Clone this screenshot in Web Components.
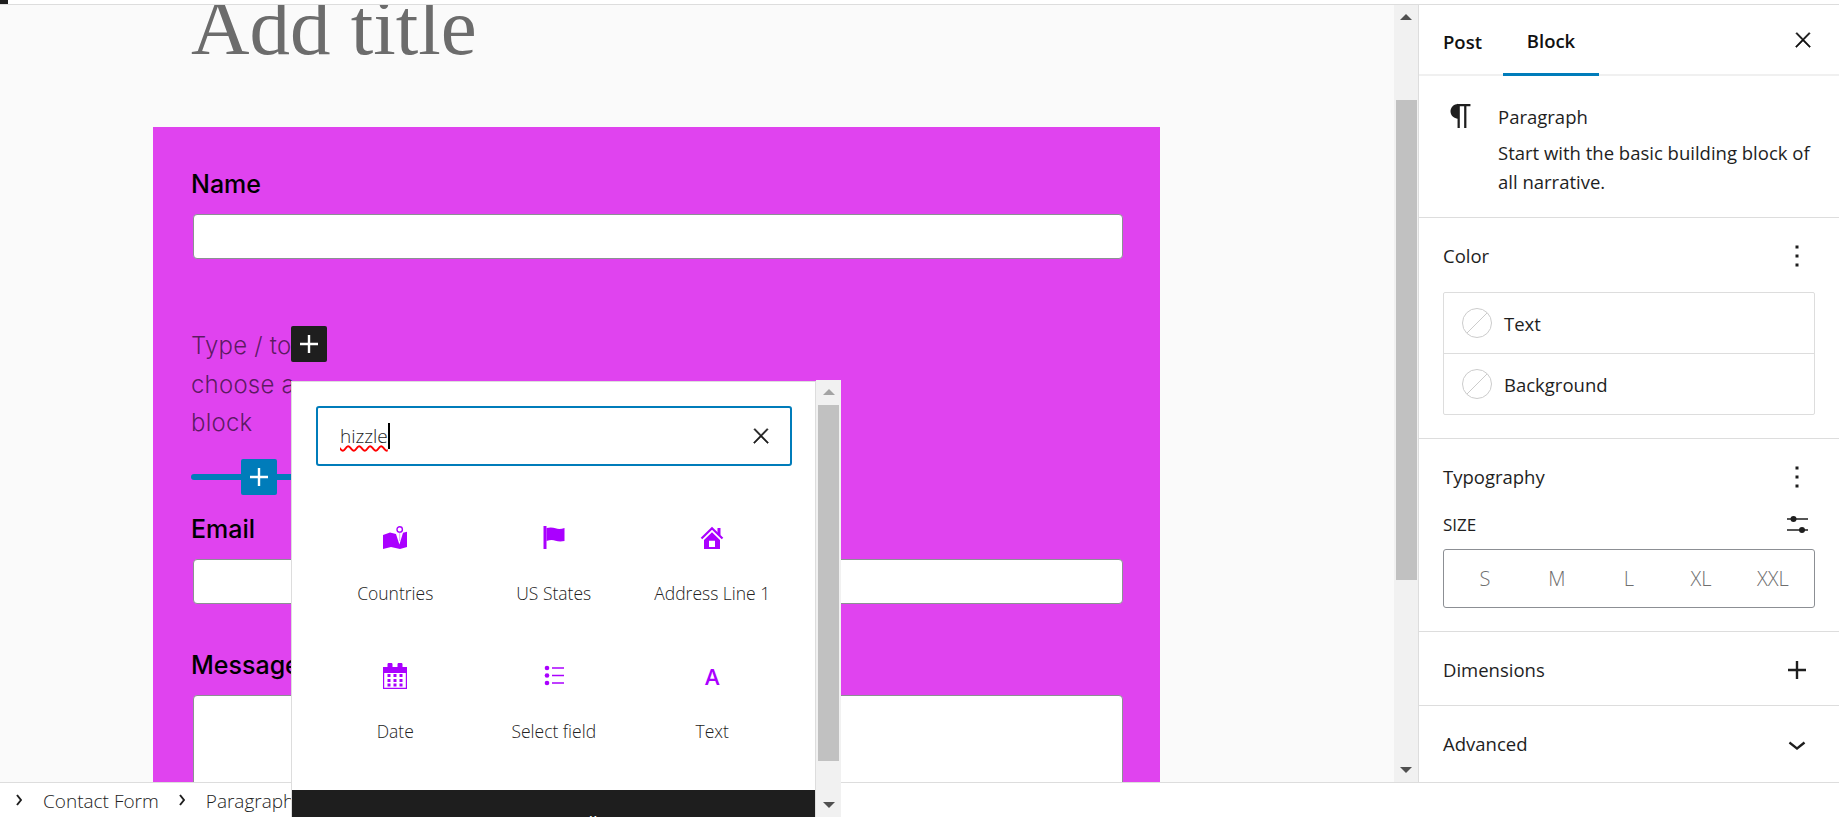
<!DOCTYPE html>
<html lang="en">
<head>
<meta charset="utf-8">
<title>Edit form</title>
<style>
    html, body { margin: 0; height: 100%; overflow: hidden; background: #fff; }
</style>
</head>
<body>
<wp-app>
    <wp-canvas slot="canvas">
        <wp-form-block>
            <wp-field label="Name"></wp-field>
            <wp-placeholder></wp-placeholder>
            <wp-field label="Email" class="email"></wp-field>
            <wp-field label="Message" class="message" multiline></wp-field>
        </wp-form-block>
    </wp-canvas>
    <wp-scrollbar slot="scrollbar" start="95" length="480" gap-left="2" gap-right="1"></wp-scrollbar>
    <wp-sidebar slot="sidebar"></wp-sidebar>
    <wp-breadcrumb slot="footer"></wp-breadcrumb>
    <wp-inserter slot="overlay" value="hizzle">
        <wp-inserter-item label="Countries"><wp-icon name="map" width="24" height="24"></wp-icon></wp-inserter-item>
        <wp-inserter-item label="US States"><wp-icon name="flag" width="24" height="24"></wp-icon></wp-inserter-item>
        <wp-inserter-item label="Address Line 1"><wp-icon name="home" width="24" height="24"></wp-icon></wp-inserter-item>
        <wp-inserter-item label="Date"><wp-icon name="calendar" width="24" height="26"></wp-icon></wp-inserter-item>
        <wp-inserter-item label="Select field"><wp-icon name="list" width="24" height="24"></wp-icon></wp-inserter-item>
        <wp-inserter-item label="Text"><span class="glyph">A</span></wp-inserter-item>
    </wp-inserter>
</wp-app>

<script>
const UI_FONT = '"Open Sans", "Noto Sans", sans-serif';
const FORM_FONT = 'Inter, Roboto, sans-serif';

const ICONS = {
    close: '<path stroke="currentColor" stroke-width=".5" d="M13 11.8l6.1-6.3-1-1-6.1 6.2-6.1-6.2-1 1 6.1 6.3-6.5 6.7 1 1 6.5-6.6 6.5 6.6 1-1z"/>',
    plus: '<path d="M18 11.2h-5.2V6h-1.6v5.2H6v1.6h5.2V18h1.6v-5.2H18z"/>',
    more: '<path d="M13 19h-2v-2h2v2zm0-6h-2v-2h2v2zm0-6h-2V5h2v2z"/>',
    chevron: '<path d="M17.5 11.6L12 16l-5.500-4.400.9-1.200L12 14l4.500-3.600 1 1.200z"/>',
    paragraph: '<path d="M18.3 4H9.9v-.1l-.9.2c-2.3.4-4 2.4-4 4.8s1.7 4.4 4 4.8l.7.1V20h1.5V5.500h2.900V20h1.500V5.500h2.700V4z"/>',
    sliders: '<path d="M0 4.200h21v1.600H0zM0 15.200h21v1.600H0z"/><circle cx="6.500" cy="5" r="3"/><circle cx="15" cy="16" r="3"/>',
    none: '<circle cx="15" cy="15" r="14.500" fill="none" stroke="#ccc"/><path d="M5 25L25 5" stroke="#ccc" stroke-width="1" fill="none"/>',
    crumb: '<path d="M1 1l4 5-4 5" fill="none" stroke="currentColor" stroke-width="2"/>',
    map: '<path d="M0 9l7-2.600 6 1.600 3.400 10.500L20 6.800l4-1V21l-7 2-9-2-8 2z"/><circle cx="16.700" cy="3.400" r="2.700" fill="none" stroke="currentColor" stroke-width="1.400"/><path d="M16.700 6v9" stroke="currentColor" stroke-width=".8" opacity=".5"/>',
    flag: '<path d="M1.500 0h3v23h-3z"/><path d="M4.500 2q5-1.200 9 .3t9-.3v13q-5 1-9-.3t-9 .3z"/>',
    home: '<path d="M1.500 12.500L12 2.200l10.500 10.300" fill="none" stroke="currentColor" stroke-width="2.200"/><path d="M17.500 2h3v7h-3z"/><path fill-rule="evenodd" d="M4 14L12 6.200 20 14v9H4zM9 14.800V21h6v-6.200z"/>',
    calendar: '<path fill-rule="evenodd" d="M0 4h4.500v-3a2 1 0 0 1 5 0v3h5v-3a2 1 0 0 1 5 0v3H24v22H0zM1.200 10v14.800h21.600V10z"/><path d="M4.500 11h3v3h-3zM10.500 11h3v3h-3zM16.500 11h3v3h-3zM4.500 16h3v3h-3zM10.500 16h3v3h-3zM16.500 16h3v3h-3zM4.500 20.500h3v3h-3zM10.500 20.500h3v3h-3zM16.500 20.500h3v3h-3z"/>',
    list: '<circle cx="5" cy="4" r="2.300"/><circle cx="5" cy="11.500" r="2.300"/><circle cx="5" cy="19" r="2.300"/><path d="M10 3.200h12v1.500H10zM10 10.700h12v1.500H10zM10 18.200h12v1.500H10z"/>',
};

class WpIcon extends HTMLElement {
    connectedCallback() {
        const name = this.getAttribute('name');
        const width = this.getAttribute('width') || 24;
        const height = this.getAttribute('height') || width;
        const box = this.getAttribute('box') || `0 0 ${width} ${height}`;
        this.attachShadow({ mode: 'open' });
        this.shadowRoot.innerHTML = `
            <style>
                :host { display: block; line-height: 0; flex: none; }
                svg { display: block; fill: currentColor; }
            </style>
            <svg width="${width}" height="${height}" viewBox="${box}" aria-hidden="true">${ICONS[name]}</svg>
        `;
    }
}

class WpScrollbar extends HTMLElement {
    connectedCallback() {
        const start = this.getAttribute('start');
        const length = this.getAttribute('length');
        const left = this.getAttribute('gap-left') || 2;
        const right = this.getAttribute('gap-right') || 2;
        const upColor = this.getAttribute('up-color') || '#505050';
        this.attachShadow({ mode: 'open' });
        this.shadowRoot.innerHTML = `
            <style>
                :host { display: flex; flex-direction: column; height: 100%; background: #f1f1f1; }
                .arrow { height: 24px; flex: none; display: flex; align-items: center; justify-content: center; }
                .up i { border-bottom: 6px solid ${upColor}; }
                .down i { border-top: 6px solid #505050; }
                i { width: 0; height: 0; border-left: 6px solid transparent; border-right: 6px solid transparent; }
                .thumb { background: #c1c1c1; flex: none; height: ${length}px; margin: ${start - 24}px ${right}px 0 ${left}px; }
                .rest { flex: 1; }
            </style>
            <div class="arrow up"><i></i></div>
            <div class="thumb"></div>
            <div class="rest"></div>
            <div class="arrow down"><i></i></div>
        `;
    }
}

class WpApp extends HTMLElement {
    constructor() {
        super();
        this.attachShadow({ mode: 'open' });
        this.shadowRoot.innerHTML = `
            <style>
                :host {
                    display: grid;
                    grid-template-rows: 4px 1px 777px 1px 34px;
                    width: 1839px;
                    height: 817px;
                    overflow: hidden;
                    position: relative;
                    background: #fff;
                    color: #1e1e1e;
                    font-family: ${UI_FONT};
                }
                .top i { display: block; width: 8px; height: 4px; background: #1e1e1e; }
                .line { background: #ddd; }
                .main { display: grid; grid-template-columns: 1394px 24px 1fr; min-height: 0; }
                .overlay { position: absolute; left: 291px; top: 380px; }
            </style>
            <div class="top"><i></i></div>
            <div class="line"></div>
            <div class="main">
                <slot name="canvas"></slot>
                <slot name="scrollbar"></slot>
                <slot name="sidebar"></slot>
            </div>
            <div class="line"></div>
            <slot name="footer"></slot>
            <div class="overlay"><slot name="overlay"></slot></div>
        `;
    }
}

class WpCanvas extends HTMLElement {
    constructor() {
        super();
        this.attachShadow({ mode: 'open' });
        this.shadowRoot.innerHTML = `
            <style>
                :host { display: block; overflow: hidden; height: 777px; background: #fafafa; padding-left: 153px; box-sizing: border-box; }
                h1 {
                    margin: -28px 0 50px 38px;
                    font: 400 81px/100px "Liberation Serif", serif;
                    color: #6c6c6c;
                }
            </style>
            <h1>Add title</h1>
            <slot></slot>
        `;
    }
}

class WpFormBlock extends HTMLElement {
    constructor() {
        super();
        this.attachShadow({ mode: 'open' });
        this.shadowRoot.innerHTML = `
            <style>
                :host { display: block; width: 1007px; height: 700px; padding: 42px 37px 0 38px; box-sizing: border-box; background: #e043ef; overflow: hidden; font-family: ${FORM_FONT}; }
            </style>
            <slot></slot>
        `;
    }
}

class WpField extends HTMLElement {
    connectedCallback() {
        const multiline = this.hasAttribute('multiline');
        this.attachShadow({ mode: 'open' });
        this.shadowRoot.innerHTML = `
            <style>
                :host { display: block; margin-bottom: 46px; }
                label { display: block; font-size: 25px; font-weight: 500; line-height: 30px; color: #000; }
                .box {
                    margin: 15px 0 0 2px;
                    height: ${multiline ? 200 : 45}px;
                    box-sizing: border-box;
                    background: #fff;
                    border: 1px solid #8c8f94;
                    border-radius: 4px;
                }
            </style>
            <label>${this.getAttribute('label')}</label>
            <div class="box"></div>
        `;
    }
}

class WpPlaceholder extends HTMLElement {
    constructor() {
        super();
        this.attachShadow({ mode: 'open' });
        this.shadowRoot.innerHTML = `
            <style>
                :host { display: block; position: relative; margin-top: 68px; height: 187px; }
                p { margin: 0; width: 100px; font-size: 24px; font-weight: 300; letter-spacing: .2px; line-height: 38.500px; color: rgba(0, 0, 0, .6); white-space: nowrap; }
                .line { position: absolute; left: 0; top: 147px; width: 120px; height: 6px; border-radius: 3px; background: #007cba; }
                button {
                    position: absolute;
                    width: 36px;
                    height: 36px;
                    padding: 0;
                    border: 0;
                    border-radius: 2px;
                    color: #fff;
                }
                .add { left: 100px; top: -1px; background: #1e1e1e; }
                .between { left: 50px; top: 132px; background: #007cba; }
            </style>
            <p>Type / to<br>choose a<br>block</p>
            <button class="add"><wp-icon name="plus" width="36" height="36" box="0 0 24 24"></wp-icon></button>
            <div class="line"></div>
            <button class="between"><wp-icon name="plus" width="36" height="36" box="0 0 24 24"></wp-icon></button>
        `;
    }
}

class WpInserter extends HTMLElement {
    connectedCallback() {
        this.attachShadow({ mode: 'open' });
        this.shadowRoot.innerHTML = `
            <style>
                :host { display: flex; width: 550px; height: 437px; }
                .panel {
                    width: 525px;
                    height: 436px;
                    margin-top: 1px;
                    box-sizing: border-box;
                    display: flex;
                    flex-direction: column;
                    background: #fff;
                    border: 1px solid #ddd;
                    border-width: 1px 1px 0 1px;
                }
                .search {
                    margin: 24px 23px 0 24px;
                    height: 60px;
                    flex: none;
                    box-sizing: border-box;
                    display: flex;
                    align-items: center;
                    justify-content: space-between;
                    padding: 0 17px 0 22px;
                    border: 2px solid #007cba;
                    border-radius: 3px;
                }
                .query { display: flex; align-items: center; font-size: 19px; font-weight: 300; color: #1e1e1e; }
                .query span { text-decoration: underline wavy #f00 1.5px; text-underline-offset: 2px; }
                .query i { display: block; width: 2px; height: 26px; background: #000; }
                .grid {
                    flex: 1;
                    min-height: 0;
                    margin: 59px 24px 0;
                    display: grid;
                    grid-template-columns: repeat(3, 158.500px);
                    grid-auto-rows: 138px;
                }
                .browse {
                    flex: none;
                    height: 27px;
                    overflow: hidden;
                    box-sizing: border-box;
                    padding-top: 23px;
                    background: #1e1e1e;
                    color: #fff;
                    font-size: 18.500px;
                    line-height: 20px;
                    text-align: center;
                }
                wp-scrollbar { width: 25px; }
            </style>
            <div class="panel">
                <div class="search">
                    <div class="query"><span>${this.getAttribute('value')}</span><i></i></div>
                    <wp-icon name="close" width="24" height="24"></wp-icon>
                </div>
                <div class="grid"><slot></slot></div>
                <div class="browse">Browse all</div>
            </div>
            <wp-scrollbar start="25" length="356" gap-left="2" gap-right="2" up-color="#a3a3a3"></wp-scrollbar>
        `;
    }
}

class WpInserterItem extends HTMLElement {
    connectedCallback() {
        this.attachShadow({ mode: 'open' });
        this.shadowRoot.innerHTML = `
            <style>
                :host { display: flex; flex-direction: column; align-items: center; color: #aa00ff; }
                .icon { height: 26px; display: flex; align-items: center; justify-content: center; }
                ::slotted(.glyph) { font-size: 22px; font-weight: 600; line-height: 26px; }
                .label { margin-top: 30px; font-size: 17.500px; font-weight: 300; line-height: 24px; color: #222; white-space: nowrap; }
            </style>
            <div class="icon"><slot></slot></div>
            <div class="label">${this.getAttribute('label')}</div>
        `;
    }
}

class WpSidebar extends HTMLElement {
    constructor() {
        super();
        this.attachShadow({ mode: 'open' });
        this.shadowRoot.innerHTML = `
            <style>
                :host { display: block; height: 777px; overflow: hidden; box-sizing: border-box; border-left: 1px solid #ddd; background: #fff; color: #1e1e1e; font-size: 18.500px; }
                .tabs { height: 71px; box-sizing: border-box; display: flex; align-items: stretch; border-bottom: 2px solid #f0f0f0; padding-left: 24px; position: relative; font-weight: 600; color: #111; }
                .tab { display: flex; align-items: center; height: 71px; padding-top: 2px; box-sizing: border-box; }
                .post { width: 60px; }
                .block { width: 96px; justify-content: center; border-bottom: 3px solid #007cba; }
                .tabs wp-icon { position: absolute; right: 24px; top: 23px; }
                .card { height: 142px; box-sizing: border-box; display: flex; border-bottom: 1px solid #ddd; padding: 22px 0 0 24px; }
                .card wp-icon { margin-right: 19px; }
                .card h2 { margin: 7px 0 0; font-size: inherit; font-weight: 500; line-height: 24px; }
                .card p { margin: 10px 0 0; line-height: 28.500px; white-space: nowrap; }
                .rows { margin-top: 17px; border: 1px solid #ddd; border-radius: 2px; }
                .row { height: 60px; display: flex; align-items: center; padding-left: 18px; }
                .row + .row { border-top: 1px solid #ddd; }
                .row wp-icon { margin-right: 12px; color: #ccc; }
                .size { display: flex; align-items: center; justify-content: space-between; height: 28px; margin-top: 14px; padding-right: 7px; font-size: 17px; }
                .segments { display: grid; grid-template-columns: repeat(5, 72px); padding-left: 5px; height: 59px; margin-top: 11px; box-sizing: border-box; align-items: center; justify-items: center; border: 1px solid #8c8f94; border-radius: 3px; color: #6f6f6f; font-size: 20px; font-weight: 300; }
            </style>
            <div class="tabs">
                <div class="tab post">Post</div>
                <div class="tab block">Block</div>
                <wp-icon name="close" width="24" height="24"></wp-icon>
            </div>
            <div class="card">
                <wp-icon name="paragraph" width="36" height="36" box="0 0 24 24"></wp-icon>
                <div>
                    <h2>Paragraph</h2>
                    <p>Start with the basic building block of<br>all narrative.</p>
                </div>
            </div>
            <wp-panel heading="Color" icon="more" height="221">
                <div class="rows">
                    <div class="row"><wp-icon name="none" width="30" height="30"></wp-icon>Text</div>
                    <div class="row"><wp-icon name="none" width="30" height="30"></wp-icon>Background</div>
                </div>
            </wp-panel>
            <wp-panel heading="Typography" icon="more" height="193">
                <div class="size">SIZE<wp-icon name="sliders" width="21" height="21"></wp-icon></div>
                <div class="segments"><span>S</span><span>M</span><span>L</span><span>XL</span><span>XXL</span></div>
            </wp-panel>
            <wp-panel heading="Dimensions" icon="plus" height="74"></wp-panel>
            <wp-panel heading="Advanced" icon="chevron" height="76"></wp-panel>
        `;
    }
}

class WpPanel extends HTMLElement {
    connectedCallback() {
        this.attachShadow({ mode: 'open' });
        this.shadowRoot.innerHTML = `
            <style>
                :host { display: block; height: ${this.getAttribute('height')}px; box-sizing: border-box; padding: 0 24px 0 24px; border-bottom: 1px solid #ddd; }
                :host(:last-of-type) { border-bottom: 0; }
                header { display: flex; align-items: center; justify-content: space-between; height: 76px; font-weight: 500; margin-bottom: -19px; }
                span { margin-top: -2px; }
            </style>
            <header>
                <span>${this.getAttribute('heading')}</span>
                <wp-icon name="${this.getAttribute('icon')}" width="36" height="36" box="0 0 24 24"></wp-icon>
            </header>
            <slot></slot>
        `;
    }
}

class WpBreadcrumb extends HTMLElement {
    constructor() {
        super();
        this.attachShadow({ mode: 'open' });
        this.shadowRoot.innerHTML = `
            <style>
                :host { display: flex; align-items: center; height: 34px; padding-left: 16px; font-size: 19px; font-weight: 300; color: #222; white-space: nowrap; }
                wp-icon { color: #1e1e1e; margin-right: 21px; }
                span { margin-right: 20px; padding-top: 2px; }
            </style>
            <wp-icon name="crumb" width="6" height="12"></wp-icon><span>Contact Form</span>
            <wp-icon name="crumb" width="6" height="12"></wp-icon><span>Paragraph</span>
        `;
    }
}

const elements = {
    'wp-icon': WpIcon,
    'wp-scrollbar': WpScrollbar,
    'wp-app': WpApp,
    'wp-canvas': WpCanvas,
    'wp-form-block': WpFormBlock,
    'wp-field': WpField,
    'wp-placeholder': WpPlaceholder,
    'wp-inserter': WpInserter,
    'wp-inserter-item': WpInserterItem,
    'wp-sidebar': WpSidebar,
    'wp-panel': WpPanel,
    'wp-breadcrumb': WpBreadcrumb,
};

Object.keys(elements).forEach(tag => {
    if (!customElements.get(tag)) {
        customElements.define(tag, elements[tag]);
    }
});
</script>
</body>
</html>
